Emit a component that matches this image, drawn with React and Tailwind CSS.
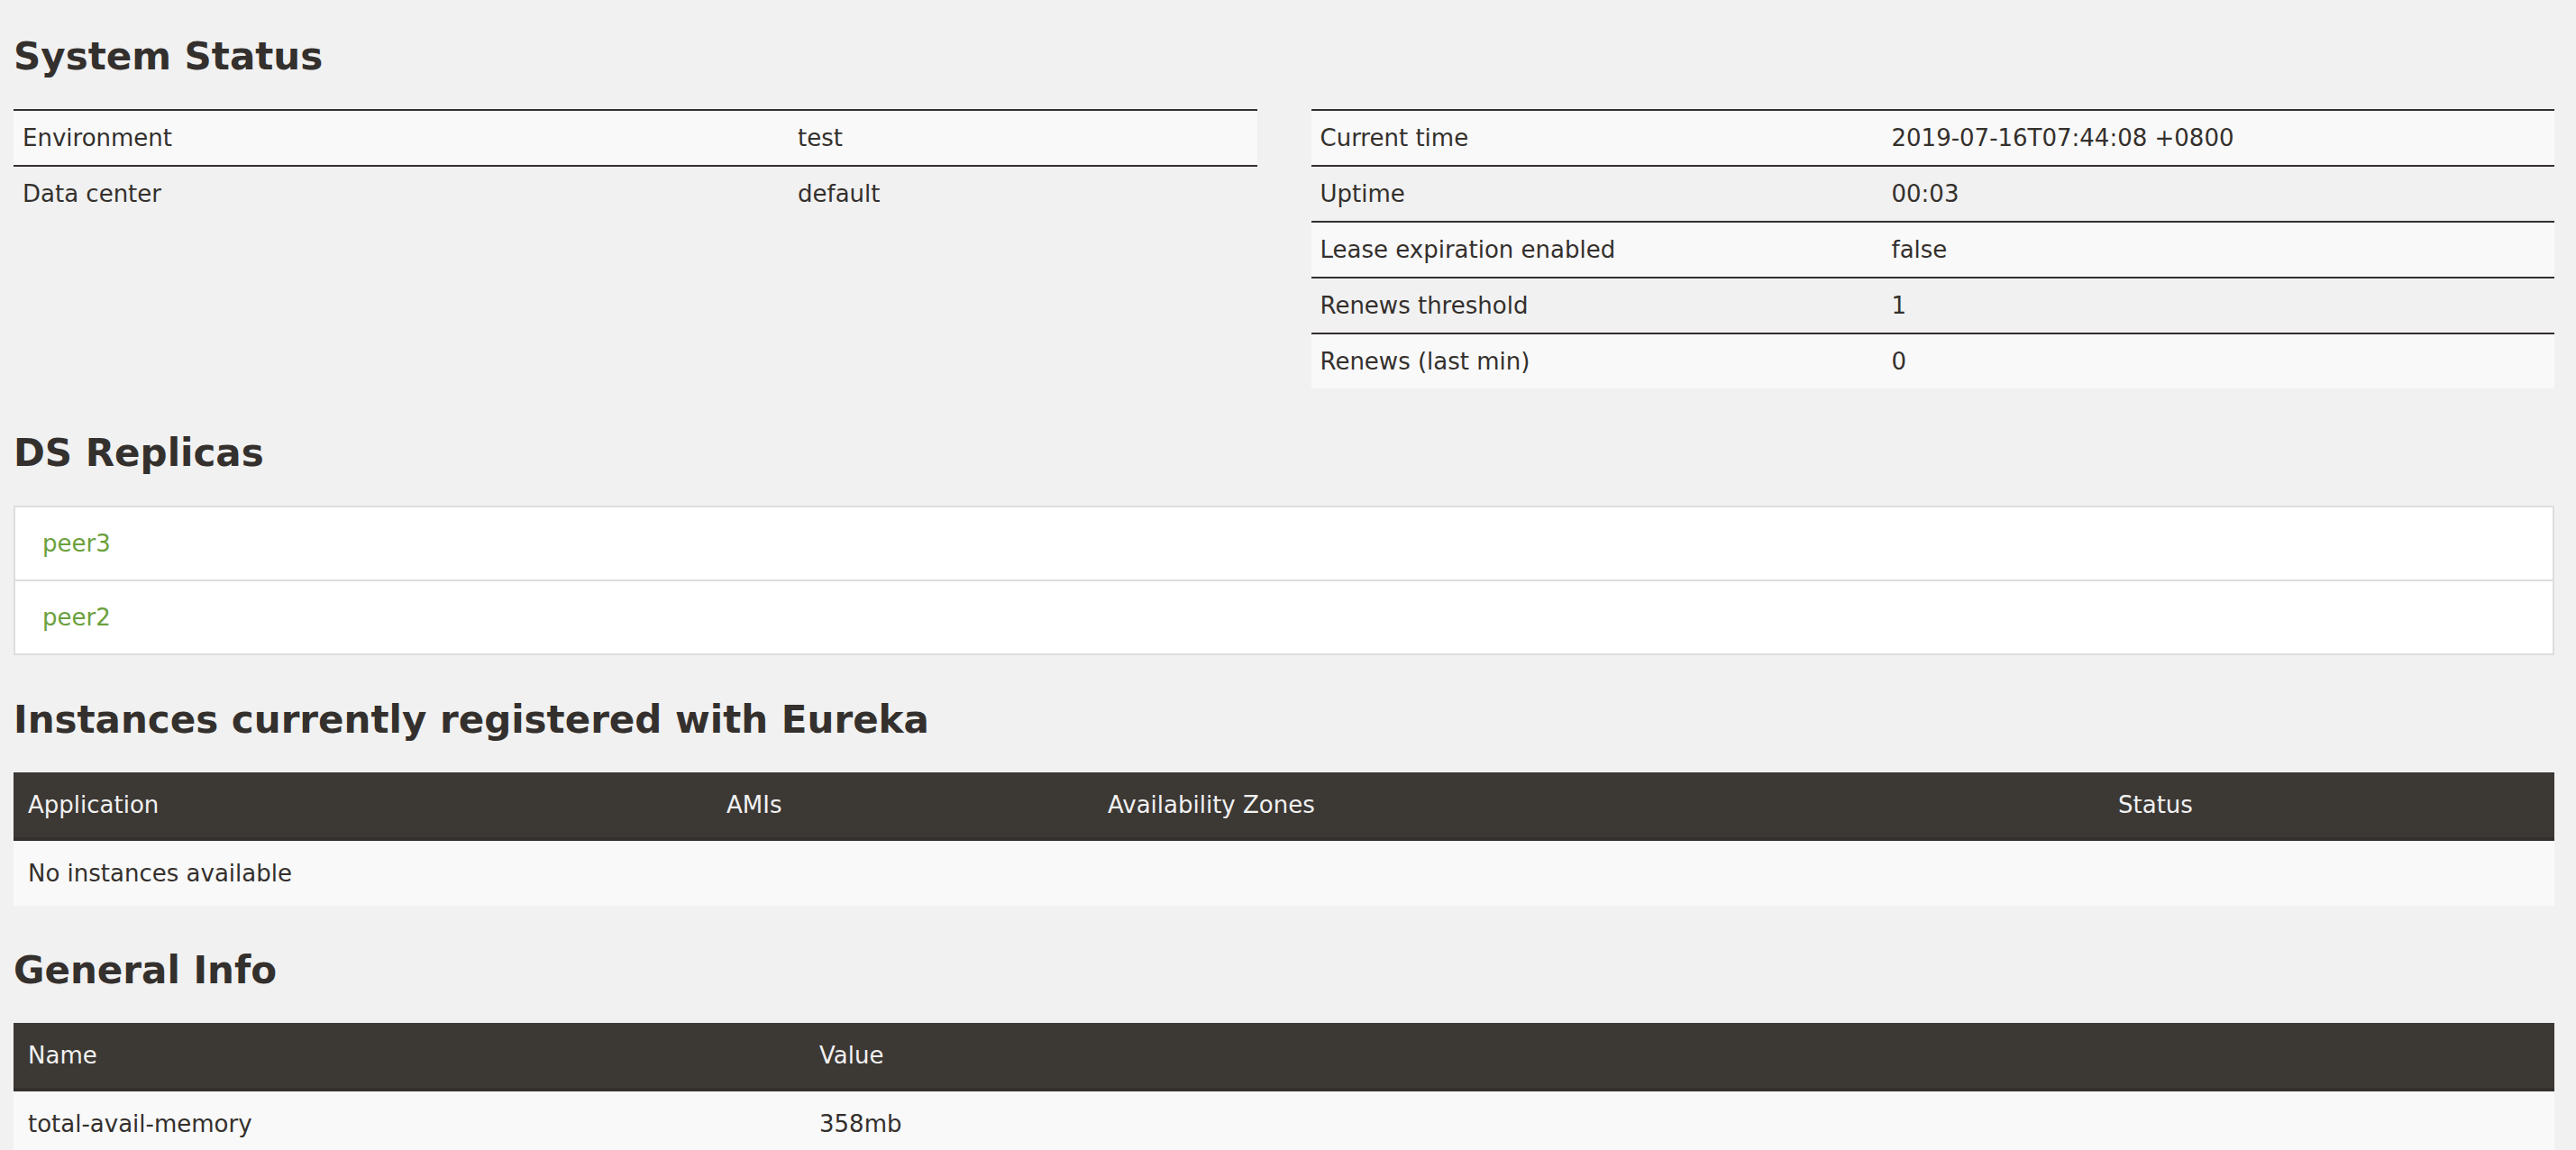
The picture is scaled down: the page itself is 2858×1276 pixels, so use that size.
import React from 'react';

const statusLeft = [
  ['Environment', 'test'],
  ['Data center', 'default'],
];

const statusRight = [
  ['Current time', '2019-07-16T07:44:08 +0800'],
  ['Uptime', '00:03'],
  ['Lease expiration enabled', 'false'],
  ['Renews threshold', '1'],
  ['Renews (last min)', '0'],
];

const replicas = ['peer3', 'peer2'];

function Heading({ children, first }) {
  return (
    <h2
      className={`${first ? 'mt-[39px]' : 'mt-[48px]'} mb-[34px] text-[42px] leading-[48px] font-bold text-[#34302d]`}
    >
      {children}
    </h2>
  );
}

function StatusTable({ rows, labelWidth }) {
  return (
    <table className="w-full table-fixed border-separate border-spacing-0">
      <tbody>
        {rows.map(([label, value], i) => (
          <tr key={label} className={i % 2 === 0 ? 'bg-[#f9f9f9]' : ''}>
            <td
              className="border-t-2 border-[#34302d] px-[10px] py-[10px] leading-[40px]"
              style={{ width: labelWidth }}
            >
              {label}
            </td>
            <td className="border-t-2 border-[#34302d] px-[10px] py-[10px] leading-[40px]">{value}</td>
          </tr>
        ))}
      </tbody>
    </table>
  );
}

function DarkTable({ columns, rows }) {
  return (
    <table className="w-full table-fixed border-separate border-spacing-0">
      <thead>
        <tr className="bg-[#3c3834] text-[#f1f1f1]">
          {columns.map(([name, width]) => (
            <th
              key={name}
              className="border-b-4 border-[#34302d] px-[16px] py-[16px] text-left font-normal leading-[40px]"
              style={width ? { width } : undefined}
            >
              {name}
            </th>
          ))}
        </tr>
      </thead>
      <tbody>
        {rows.map((row, i) => (
          <tr key={i} className="bg-[#f9f9f9]">
            {row.map((cell, j) => (
              <td
                key={j}
                colSpan={row.length === 1 ? columns.length : undefined}
                className="px-[16px] py-[16px] leading-[40px]"
              >
                {cell}
              </td>
            ))}
          </tr>
        ))}
      </tbody>
    </table>
  );
}

export default function App() {
  return (
    <div className="h-screen overflow-hidden bg-[#f1f1f1] pl-[15px] pr-[24px] font-['DejaVu_Sans',Verdana,sans-serif] text-[26px] text-[#34302d]">
      <Heading first>System Status</Heading>
      <div className="grid grid-cols-2 gap-x-[60px] items-start">
        <StatusTable rows={statusLeft} labelWidth={860} />
        <StatusTable rows={statusRight} labelWidth={634} />
      </div>

      <Heading>DS Replicas</Heading>
      <ul className="border-2 border-[#dddddd] bg-white divide-y-2 divide-[#dddddd]">
        {replicas.map((peer) => (
          <li key={peer} className="px-[30px] py-[20px] leading-[40px]">
            <a href="#" className="text-[#6ba03c]">
              {peer}
            </a>
          </li>
        ))}
      </ul>

      <Heading>Instances currently registered with Eureka</Heading>
      <DarkTable
        columns={[
          ['Application', 775],
          ['AMIs', 423],
          ['Availability Zones', 1121],
          ['Status', null],
        ]}
        rows={[['No instances available']]}
      />

      <Heading>General Info</Heading>
      <DarkTable
        columns={[
          ['Name', 878],
          ['Value', null],
        ]}
        rows={[['total-avail-memory', '358mb']]}
      />
    </div>
  );
}
